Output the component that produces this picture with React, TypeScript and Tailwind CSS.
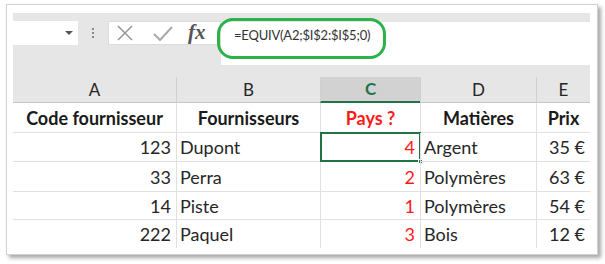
import React from "react";

const cols = [163, 144, 100, 116, 54];

type Cell = { t: string; align: "l" | "r" | "c"; bold?: boolean; red?: boolean };

const rows: { h: number; cells: Cell[] }[] = [
  {
    h: 30,
    cells: [
      { t: "Code fournisseur", align: "c", bold: true },
      { t: "Fournisseurs", align: "c", bold: true },
      { t: "Pays ?", align: "c", bold: true, red: true },
      { t: "Matières", align: "c", bold: true },
      { t: "Prix", align: "c", bold: true },
    ],
  },
  {
    h: 29,
    cells: [
      { t: "123", align: "r" },
      { t: "Dupont", align: "l" },
      { t: "4", align: "r", red: true },
      { t: "Argent", align: "l" },
      { t: "35 €", align: "r" },
    ],
  },
  {
    h: 30,
    cells: [
      { t: "33", align: "r" },
      { t: "Perra", align: "l" },
      { t: "2", align: "r", red: true },
      { t: "Polymères", align: "l" },
      { t: "63 €", align: "r" },
    ],
  },
  {
    h: 28,
    cells: [
      { t: "14", align: "r" },
      { t: "Piste", align: "l" },
      { t: "1", align: "r", red: true },
      { t: "Polymères", align: "l" },
      { t: "54 €", align: "r" },
    ],
  },
  {
    h: 28,
    cells: [
      { t: "222", align: "r" },
      { t: "Paquel", align: "l" },
      { t: "3", align: "r", red: true },
      { t: "Bois", align: "l" },
      { t: "12 €", align: "r" },
    ],
  },
];

export default function App() {
  return (
    <div className="w-[605px] h-[264px] bg-white pt-[4px] pl-[6px] font-['Lato',sans-serif]">
      <div className="relative w-[592px] h-[251px] border border-[#d2d2d2] bg-white pt-[8px] pl-[6px] shadow-[3px_3px_4px_rgba(0,0,0,0.35)]">
        {/* top gray area */}
        <div className="w-[577px] h-[90px] bg-[#e6e6e6] flex flex-col">
          <div className="h-[52px] flex">
            <div className="w-[208px] flex items-start pt-[8px]">
              <div className="relative w-[65px] h-[24px] bg-white">
                <div className="absolute left-[52px] top-[10px] w-0 h-0 border-l-[4px] border-r-[4px] border-t-[4px] border-l-transparent border-r-transparent border-t-[#555]" />
              </div>
              <div className="w-[30px] h-[24px] flex flex-col items-center justify-center gap-[2px]">
                <div className="w-[2px] h-[2px] bg-[#8a8a8a]" />
                <div className="w-[2px] h-[2px] bg-[#8a8a8a]" />
                <div className="w-[2px] h-[2px] bg-[#8a8a8a]" />
              </div>
              <div className="w-[113px] h-[24px] bg-white border border-[#dcdcdc] flex items-center">
                <svg width="16" height="16" viewBox="0 0 16 16" className="ml-[8px]">
                  <path d="M1 1 L15 15 M15 1 L1 15" stroke="#9a9a9a" strokeWidth="1.6" fill="none" />
                </svg>
                <svg width="20" height="15" viewBox="0 0 20 15" className="ml-[20px]">
                  <path d="M1 8 L7 14 L19 1" stroke="#a8a8a8" strokeWidth="2" fill="none" />
                </svg>
                <span className="ml-[15px] font-['Liberation_Serif',serif] italic font-bold text-[21px] leading-none text-[#555] -mt-[2px]">
                  fx
                </span>
              </div>
            </div>
            <div className="flex-1 pt-[9px]">
              <div className="h-[43px] bg-white pl-[13px] pt-[5px] text-[13px] leading-[16px] text-[#333] tracking-[-0.2px]">
                =EQUIV(A2;$I$2:$I$5;0)
              </div>
            </div>
          </div>
          <div className="h-[12px]" />
          <div className="h-[26px] flex">
            {["A", "B", "C", "D", "E"].map((l, i) => (
              <div
                key={l}
                style={{ width: cols[i] }}
                className={
                  "h-full flex items-center justify-center text-[17px] " +
                  (i > 0 ? "border-l border-[#d0d0d0] " : "") +
                  (l === "C"
                    ? "bg-[#d2d2d2] text-[#217346] font-bold border-b-2 border-b-[#217346]"
                    : "text-[#262626] border-b border-b-[#c6c6c6]")
                }
              >
                {l}
              </div>
            ))}
          </div>
        </div>
        {/* body */}
        <div className="w-[577px] flex flex-col">
          {rows.map((r, ri) => (
            <div key={ri} className="flex" style={{ height: r.h }}>
              {r.cells.map((c, ci) => (
                <div
                  key={ci}
                  style={{ width: cols[ci] }}
                  className={
                    "relative h-full flex items-center text-[18px] leading-none " +
                    (ci > 0 ? "border-l border-[#e0e0e0] " : "") +
                    (ri < rows.length - 1 ? "border-b border-[#e0e0e0] " : "") +
                    (c.align === "r"
                      ? "justify-end pr-[5px] "
                      : c.align === "l"
                      ? "justify-start pl-[3px] "
                      : "justify-center ") +
                    (c.bold ? "font-bold " : "") +
                    (c.red ? "text-[#ff1a1a]" : c.bold ? "text-[#1a1a1a]" : "text-[#262626]")
                  }
                >
                  {ri === 1 && ci === 2 && (
                    <div className="absolute -left-[1px] -top-[1px] w-[101px] h-[30px] border-2 border-[#217346]">
                      <div className="absolute -right-[4px] -bottom-[4px] w-[5px] h-[5px] bg-[#217346] border border-white" />
                    </div>
                  )}
                  <span className="relative">{c.t}</span>
                </div>
              ))}
            </div>
          ))}
        </div>
        {/* annotation ring */}
        <div className="absolute left-[210px] top-[13px] w-[169px] h-[41px] rounded-[16px] border-[3px] border-[#2db24a]" />
      </div>
    </div>
  );
}
